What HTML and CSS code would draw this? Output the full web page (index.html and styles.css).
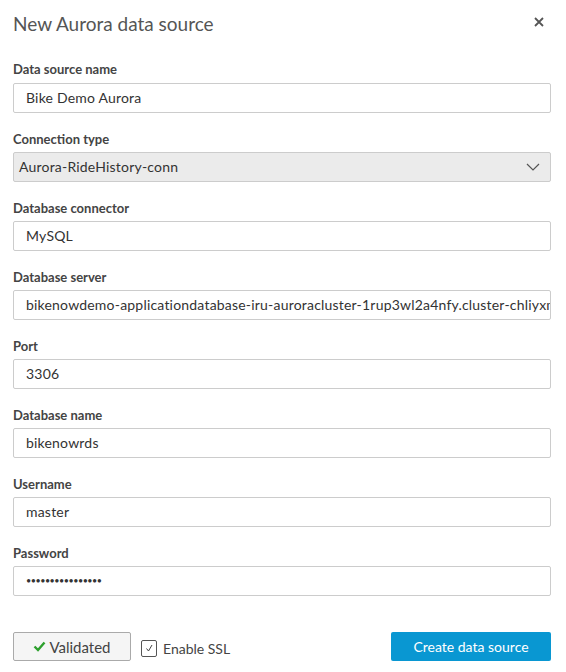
FILE: index.html
```html
<!DOCTYPE html>
<html>
<head>
<meta charset="utf-8">
<link rel="stylesheet" href="styles.css">
</head>
<body>
<div class="dialog">
  <div class="header">
    <h1 class="title">New Aurora data source</h1>
    <span class="close">
      <svg width="10" height="10" viewBox="0 0 10 10"><path d="M1 1L9 9M9 1L1 9" stroke="#555" stroke-width="1.8" fill="none"/></svg>
    </span>
  </div>
  <div class="field">
    <div class="label">Data source name</div>
    <div class="input">Bike Demo Aurora</div>
  </div>
  <div class="field">
    <div class="label">Connection type</div>
    <div class="select">
      <span>Aurora-RideHistory-conn</span>
      <svg class="chev" width="14" height="8" viewBox="0 0 14 8"><path d="M1 1L7 7L13 1" stroke="#555" stroke-width="1.2" fill="none"/></svg>
    </div>
  </div>
  <div class="field">
    <div class="label">Database connector</div>
    <div class="input">MySQL</div>
  </div>
  <div class="field">
    <div class="label">Database server</div>
    <div class="input clip">bikenowdemo-applicationdatabase-iru-auroracluster-1rup3wl2a4nfy.cluster-chliyxmbvqkz.us-east-1.rds.amazonaws.com</div>
  </div>
  <div class="field">
    <div class="label">Port</div>
    <div class="input">3306</div>
  </div>
  <div class="field">
    <div class="label">Database name</div>
    <div class="input">bikenowrds</div>
  </div>
  <div class="field">
    <div class="label">Username</div>
    <div class="input">master</div>
  </div>
  <div class="field">
    <div class="label">Password</div>
    <div class="input pw">••••••••••••••••</div>
  </div>
  <div class="footer">
    <button class="btn-validated">
      <svg width="13" height="11" viewBox="0 0 13 11"><path d="M1.5 5.5L5 9L11.5 1.5" stroke="#2ea02e" stroke-width="2.4" fill="none"/></svg>
      <span>Validated</span>
    </button>
    <label class="ssl">
      <span class="box">
        <svg width="10" height="10" viewBox="0 0 10 10"><path d="M2.5 5.5L4.5 8L8 2" stroke="#444" stroke-width="1" fill="none"/></svg>
      </span>
      <span>Enable SSL</span>
    </label>
    <div class="spacer"></div>
    <button class="btn-primary">Create data source</button>
  </div>
</div>
</body>
</html>
```
FILE: styles.css
```css
html, body {
  margin: 0;
  padding: 0;
  background: #fff;
}
body {
  font-family: Lato, "Open Sans", sans-serif;
  color: #333;
}
.dialog {
  width: 538px;
  padding: 0 15px 0 13px;
}
.header {
  display: flex;
  align-items: center;
  justify-content: space-between;
  height: 48px;
}
.title {
  margin: 0;
  font-size: 19px;
  font-weight: 400;
  color: #555;
  line-height: 24px;
}
.close {
  display: flex;
  width: 10px;
  height: 10px;
  margin-right: 7px;
  margin-top: -5px;
}
.field {
  margin-top: 17px;
}
.header + .field {
  margin-top: 13px;
}
.label {
  font-size: 13px;
  font-weight: 700;
  color: #444;
  line-height: 16px;
  margin-bottom: 6px;
}
.field + .field .label {
  padding-top: 1px;
  margin-bottom: 5px;
}
.input, .select {
  box-sizing: border-box;
  height: 30px;
  border: 1px solid #ccc;
  border-radius: 2px;
  font-size: 14px;
  line-height: 28px;
  color: #333;
  padding: 0 12px;
  white-space: nowrap;
  overflow: hidden;
  letter-spacing: 0.2px;
}
.select {
  background: #ebebeb;
  padding: 0 6px 0 5px;
  display: flex;
  align-items: center;
  justify-content: space-between;
}
.chev {
  margin-right: 4px;
}
.pw {
  font-size: 9px;
  letter-spacing: -0.5px;
}
.footer {
  display: flex;
  align-items: center;
  margin-top: 36px;
}
.btn-validated {
  box-sizing: border-box;
  width: 118px;
  height: 29px;
  border: 1px solid #aaa;
  border-radius: 2px;
  background: #f5f5f5;
  font-family: inherit;
  font-size: 15px;
  color: #444;
  display: flex;
  align-items: center;
  justify-content: center;
  gap: 3px;
  padding: 0;
}
.ssl {
  display: flex;
  align-items: center;
  gap: 6px;
  margin-left: 10px;
  font-size: 14px;
  color: #444;
  margin-top: 3px;
}
.box {
  box-sizing: border-box;
  width: 16px;
  height: 17px;
  border: 1px solid #555;
  border-radius: 2px;
  display: flex;
  align-items: center;
  justify-content: center;
}
.spacer {
  flex: 1;
}
.btn-primary {
  box-sizing: border-box;
  width: 160px;
  height: 29px;
  border: none;
  border-radius: 2px;
  background: #0997d2;
  color: #fff;
  font-family: inherit;
  font-size: 14px;
  padding: 0;
}
```
